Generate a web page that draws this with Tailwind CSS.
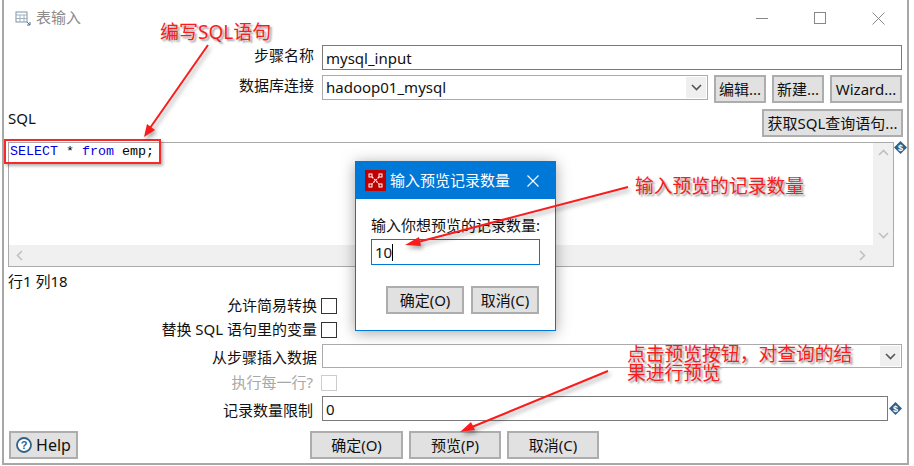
<!DOCTYPE html>
<html lang="zh">
<head>
    <meta charset="UTF-8">
    <title>表输入</title>
    <script src="https://cdn.jsdelivr.net/npm/@tailwindcss/browser@4"></script>
</head>
<body class="bg-white">
<div class="relative w-[914px] h-[466px] overflow-hidden bg-white text-[15px] text-[#111] font-['Noto_Sans','Noto_Sans_CJK_SC',sans-serif]">
    <!-- main window -->
    <div class="ml-[2px] w-[907px] h-[465px] border-l-2 border-r-2 border-b-2 border-[#a8a8a8] flex flex-col">
        <div class="h-[36px] flex items-center pl-[11px] gap-[4px] text-[#8c8c8c]">
            <svg width="17" height="17" viewBox="0 0 17 17" fill="none"><rect x="1" y="2" width="11" height="10" stroke="#7f93a8"/><path d="M1 5h11M5 5v7M9 5v7M1 8.500h11" stroke="#9fb0c0"/><path d="M12 12l3 3M15 12v3h-3" stroke="#4a6a88"/></svg>
            <span class="-mt-[1px]">表输入</span>
            <div class="ml-auto flex items-center gap-[46px] pr-[22px]">
                <div class="w-[12px] h-px bg-[#888]"></div>
                <div class="w-[12px] h-[12px] border border-[#888]"></div>
                <svg width="13" height="13" viewBox="0 0 13 13"><path d="M0.500 0.500l12 12M12.500 0.500l-12 12" stroke="#888" fill="none"/></svg>
            </div>
        </div>

        <div class="mt-[9px] h-[25px] flex items-center">
            <div class="w-[310px] text-right -mt-[4px]">步骤名称</div>
            <input class="ml-[8px] w-[580px] h-[25px] border border-[#7a7a7a] px-[3px] outline-none" value="mysql_input">
        </div>

        <div class="mt-[5px] h-[29px] flex items-start">
            <div class="w-[310px] text-right -mt-[1px]">数据库连接</div>
            <div class="ml-[8px] w-[386px] h-[25px] border border-[#ababab] flex items-center pl-[3px]">
                <span class="flex-1">hadoop01_mysql</span>
                <div class="w-[20px] h-[21px] mr-px bg-[#efefef] flex items-center justify-center">
                    <svg width="11" height="7" viewBox="0 0 11 7"><path d="M1 1l4.500 4.500L10 1" stroke="#555" stroke-width="1.600" fill="none"/></svg>
                </div>
            </div>
            <button class="ml-[6px] w-[52px] h-[28px] bg-[#e1e1e1] border-2 border-[#adadad] whitespace-nowrap">编辑...</button>
            <button class="ml-[6px] w-[52px] h-[28px] bg-[#e1e1e1] border-2 border-[#adadad] whitespace-nowrap">新建...</button>
            <button class="ml-[6px] w-[72px] h-[28px] bg-[#e1e1e1] border-2 border-[#adadad] whitespace-nowrap">Wizard...</button>
        </div>

        <div class="mt-[5px] h-[28px] flex items-start justify-between pl-[4px]">
            <span class="-mt-[2px]">SQL</span>
            <button class="mr-[4px] w-[141px] h-[28px] bg-[#e1e1e1] border-2 border-[#adadad] whitespace-nowrap">获取SQL查询语句...</button>
        </div>

        <div class="mt-[5px] flex items-start pl-[4px]">
            <div class="w-[886px] h-[125px] border border-[#ababab] flex flex-col">
                <div class="flex-1 flex">
                    <div class="flex-1 pl-px pt-[1px] font-['Liberation_Mono',monospace] text-[13.330px] leading-[16px] text-black"><span class="text-[#0000e0]">SELECT</span> * <span class="text-[#0000e0]">from</span> emp;</div>
                    <div class="w-[20px] bg-[#f0f0f0] flex flex-col items-center justify-between py-[6px]">
                        <svg width="11" height="7" viewBox="0 0 11 7"><path d="M1 6l4.500-4.500L10 6" stroke="#c0c0c0" stroke-width="1.600" fill="none"/></svg>
                        <svg width="11" height="7" viewBox="0 0 11 7"><path d="M1 1l4.500 4.500L10 1" stroke="#c0c0c0" stroke-width="1.600" fill="none"/></svg>
                    </div>
                </div>
                <div class="h-[21px] bg-[#f0f0f0] flex items-center justify-between pl-[7px] pr-[27px]">
                    <svg width="7" height="11" viewBox="0 0 7 11"><path d="M6 1L1.500 5.500 6 10" stroke="#c0c0c0" stroke-width="1.600" fill="none"/></svg>
                    <svg width="7" height="11" viewBox="0 0 7 11"><path d="M1 1l4.500 4.500L1 10" stroke="#c0c0c0" stroke-width="1.600" fill="none"/></svg>
                </div>
            </div>
            <svg class="mt-[-1px]" width="13" height="13" viewBox="0 0 13 13"><path d="M6.500 0L13 6.500 6.500 13 0 6.500z" fill="#2f6088"/><text x="6.500" y="9.800" text-anchor="middle" font-size="9" font-weight="700" fill="#fff" font-family="Liberation Sans">$</text></svg>
        </div>

        <div class="mt-[4px] h-[20px] pl-[4px] leading-[20px]">行1 列18</div>

        <div class="mt-[6px] h-[17px] flex items-center">
            <div class="w-[313px] text-right">允许简易转换</div>
            <div class="ml-[4px] w-[16px] h-[16px] border border-[#333]"></div>
        </div>
        <div class="mt-[7px] h-[17px] flex items-center">
            <div class="w-[313px] text-right">替换 SQL 语句里的变量</div>
            <div class="ml-[4px] w-[16px] h-[16px] border border-[#333]"></div>
        </div>
        <div class="mt-[6px] h-[24px] flex items-center">
            <div class="w-[313px] text-right mt-[2px]">从步骤插入数据</div>
            <div class="ml-[5px] w-[580px] h-[24px] border border-[#ababab] flex justify-end items-center pr-px">
                <div class="w-[20px] h-[20px] bg-[#efefef] flex items-center justify-center">
                    <svg width="11" height="7" viewBox="0 0 11 7"><path d="M1 1l4.500 4.500L10 1" stroke="#555" stroke-width="1.600" fill="none"/></svg>
                </div>
            </div>
        </div>
        <div class="mt-[6px] h-[17px] flex items-center">
            <div class="w-[309px] text-right text-[#a8a8a8]">执行每一行?</div>
            <div class="ml-[8px] w-[16px] h-[16px] border border-[#ccc]"></div>
        </div>
        <div class="mt-[5px] h-[25px] flex items-center">
            <div class="w-[309px] text-right mt-[4px]">记录数量限制</div>
            <input class="ml-[9px] w-[566px] h-[25px] border border-[#7a7a7a] px-[3px] outline-none" value="0">
            <svg class="ml-px" width="13" height="13" viewBox="0 0 13 13"><path d="M6.500 0L13 6.500 6.500 13 0 6.500z" fill="#2f6088"/><text x="6.500" y="9.800" text-anchor="middle" font-size="9" font-weight="700" fill="#fff" font-family="Liberation Sans">$</text></svg>
        </div>

        <div class="mt-[10px] h-[28px] flex items-center pl-[5px]">
            <button class="w-[69px] h-[28px] bg-[#e1e1e1] border-2 border-[#adadad] flex items-center justify-center gap-[4px] text-[16px]">
                <svg width="16" height="16" viewBox="0 0 16 16"><circle cx="8" cy="8" r="7" fill="#fff" stroke="#2f6088" stroke-width="1.800"/><text x="8" y="12" text-anchor="middle" font-size="11" font-weight="700" fill="#2f6088" font-family="Liberation Sans">?</text></svg>
                Help
            </button>
            <div class="ml-[232px] flex gap-[6px]">
                <button class="w-[93px] h-[28px] bg-[#e1e1e1] border-2 border-[#adadad]">确定(O)</button>
                <button class="w-[92px] h-[28px] bg-[#e1e1e1] border-2 border-[#adadad]">预览(P)</button>
                <button class="w-[92px] h-[28px] bg-[#e1e1e1] border-2 border-[#adadad]">取消(C)</button>
            </div>
        </div>
    </div>

    <!-- preview dialog -->
    <div class="absolute left-[355px] top-[161px] w-[201px] h-[170px] bg-white border border-[#0078d7] shadow-[0_2px_14px_rgba(0,0,0,0.35)] flex flex-col">
        <div class="h-[37px] bg-[#0078d7] text-white flex items-center pl-[9px] gap-[4px]">
            <div class="w-[21px] h-[21px] bg-[#c00000] flex items-center justify-center">
                <svg width="15" height="15" viewBox="0 0 15 15"><path d="M4 4l7 7M11 4l-7 7" stroke="#fff" stroke-width="1.200" stroke-dasharray="2 1" fill="none"/><rect x="1" y="1" width="3" height="3" fill="none" stroke="#fff"/><rect x="11" y="1" width="3" height="3" fill="none" stroke="#fff"/><rect x="1" y="11" width="3" height="3" fill="none" stroke="#fff"/><rect x="11" y="11" width="3" height="3" fill="none" stroke="#fff"/></svg>
            </div>
            <span class="whitespace-nowrap">输入预览记录数量</span>
            <svg class="ml-[13px]" width="12" height="12" viewBox="0 0 12 12"><path d="M0.500 0.500l11 11M11.500 0.500l-11 11" stroke="#fff" stroke-width="1.100" fill="none"/></svg>
        </div>
        <div class="mt-[16px] pl-[15px] h-[20px] leading-[20px] whitespace-nowrap">输入你想预览的记录数量:</div>
        <div class="mt-[4px] ml-[15px] w-[169px] h-[26px] border border-[#0078d7] pl-[3px] flex items-center">10<span class="w-px h-[17px] bg-black"></span></div>
        <div class="mt-[21px] ml-[30px] flex gap-[7px]">
            <button class="w-[78px] h-[28px] bg-[#e1e1e1] border-2 border-[#adadad]">确定(O)</button>
            <button class="w-[68px] h-[28px] bg-[#e1e1e1] border-2 border-[#adadad]">取消(C)</button>
        </div>
    </div>

    <!-- annotations -->
    <div class="absolute left-[4px] top-[139px] w-[157px] h-[25px] border-2 border-[#f82828] shadow-[2px_2px_3px_rgba(0,0,0,0.3)]"></div>
    <svg class="absolute left-0 top-0 drop-shadow-[2px_3px_2px_rgba(0,0,0,0.35)]" width="914" height="466" viewBox="0 0 914 466" fill="none">
        <path d="M208 45L150 128" stroke="#fa1c1c" stroke-width="2"/>
        <path d="M144 137l3-13 8 6z" fill="#fa1c1c"/>
        <path d="M628 187L418 242" stroke="#fa1c1c" stroke-width="2"/>
        <path d="M405 245l14-8 2 9z" fill="#fa1c1c"/>
        <path d="M608 371L472 427" stroke="#fa1c1c" stroke-width="2"/>
        <path d="M460 432l11-10 4 8z" fill="#fa1c1c"/>
    </svg>
    <div class="absolute left-[160px] top-[20px] text-[19px] leading-[24px] text-[#fa1c1c] [text-shadow:2px_2px_2px_#999] whitespace-nowrap">编写SQL语句</div>
    <div class="absolute left-[635px] top-[174px] text-[18.800px] leading-[24px] text-[#fa1c1c] [text-shadow:2px_2px_2px_#999] whitespace-nowrap">输入预览的记录数量</div>
    <div class="absolute left-[627px] top-[345px] w-[230px] text-[18.800px] leading-[19px] text-[#fa1c1c] [text-shadow:2px_2px_2px_#999]">点击预览按钮&#65292;对查询的结果进行预览</div>
</div>
</body>
</html>
